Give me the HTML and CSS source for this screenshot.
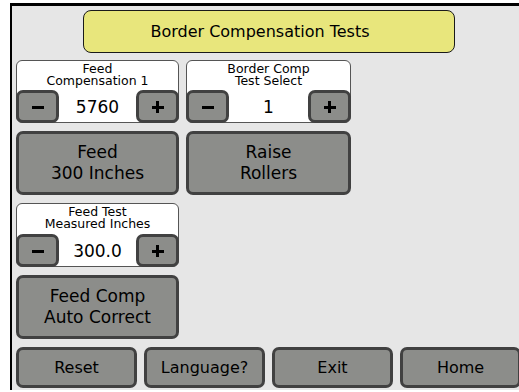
FILE: index.html
```html
<!DOCTYPE html>
<html lang="en">
<head>
  <meta charset="UTF-8">
  <title>Border Compensation Tests</title>
  <link rel="stylesheet" href="styles.css">
</head>
<body>
  <div class="panel">
    <div class="title">Border Compensation Tests</div>

    <div class="grid">
      <div class="spinner">
        <div class="label">Feed<br>Compensation 1</div>
        <div class="controls">
          <button class="step minus"></button>
          <span class="value">5760</span>
          <button class="step plus"></button>
        </div>
      </div>

      <div class="spinner">
        <div class="label">Border Comp<br>Test Select</div>
        <div class="controls">
          <button class="step minus"></button>
          <span class="value">1</span>
          <button class="step plus"></button>
        </div>
      </div>

      <button class="btn">Feed<br>300 Inches</button>
      <button class="btn">Raise<br>Rollers</button>

      <div class="spinner">
        <div class="label">Feed Test<br>Measured Inches</div>
        <div class="controls">
          <button class="step minus"></button>
          <span class="value">300.0</span>
          <button class="step plus"></button>
        </div>
      </div>
      <div></div>

      <button class="btn">Feed Comp<br>Auto Correct</button>
    </div>

    <div class="footer">
      <button class="btn small">Reset</button>
      <button class="btn small">Language?</button>
      <button class="btn small">Exit</button>
      <button class="btn small">Home</button>
    </div>
  </div>
</body>
</html>
```

FILE: styles.css
```css
body {
  margin: 0;
  background: #ffffff;
  font-family: "DejaVu Sans", sans-serif;
  color: #000;
  overflow: hidden;
}

.panel {
  margin: 3px 0 0 10px;
  height: 387px;
  background: #e6e6e6;
  border-top: 3px solid #000;
  border-left: 2px solid #000;
  padding: 4px 0 0 4px;
  box-sizing: border-box;
}

.title {
  margin-left: 67px;
  width: 372px;
  height: 43px;
  box-sizing: border-box;
  padding-right: 18px;
  background: #e8e67c;
  border: 1.5px solid #1a1a1a;
  border-radius: 8px;
  display: flex;
  align-items: center;
  justify-content: center;
  font-size: 16px;
}

.grid {
  margin-top: 7px;
  display: grid;
  grid-template-columns: 163px 165px;
  grid-template-rows: 63px 64px 64px 64px;
  column-gap: 7px;
  row-gap: 8px;
}

.spinner {
  background: #fff;
  border: 1px solid #555;
  border-radius: 6px;
  display: flex;
  flex-direction: column;
  justify-content: space-between;
}

.label {
  text-align: center;
  font-size: 12.5px;
  line-height: 12px;
  padding-top: 2px;
}

.controls {
  display: flex;
  align-items: center;
  margin: 0 -1px -1px -1px;
}

.value {
  flex: 1;
  text-align: center;
  font-size: 17px;
}

.btn,
.step {
  font-family: inherit;
  color: #000;
  background: #8c8d8a;
  border: 3px solid #414141;
  border-radius: 7px;
  padding: 0;
  box-sizing: border-box;
}

.btn {
  font-size: 17px;
  line-height: 21px;
}

.step {
  width: 43px;
  height: 33px;
  position: relative;
}

.step::before,
.step::after {
  content: "";
  position: absolute;
  left: 50%;
  top: 50%;
  background: #000;
}

.step::before {
  width: 12px;
  height: 3px;
  margin: -1px 0 0 -6px;
}

.plus::after {
  width: 3px;
  height: 12px;
  margin: -5.5px 0 0 -1.5px;
}

.footer {
  margin-top: 8px;
  display: grid;
  grid-template-columns: repeat(4, 121px);
  column-gap: 7px;
  height: 41px;
}

.small {
  font-size: 16px;
}
```
